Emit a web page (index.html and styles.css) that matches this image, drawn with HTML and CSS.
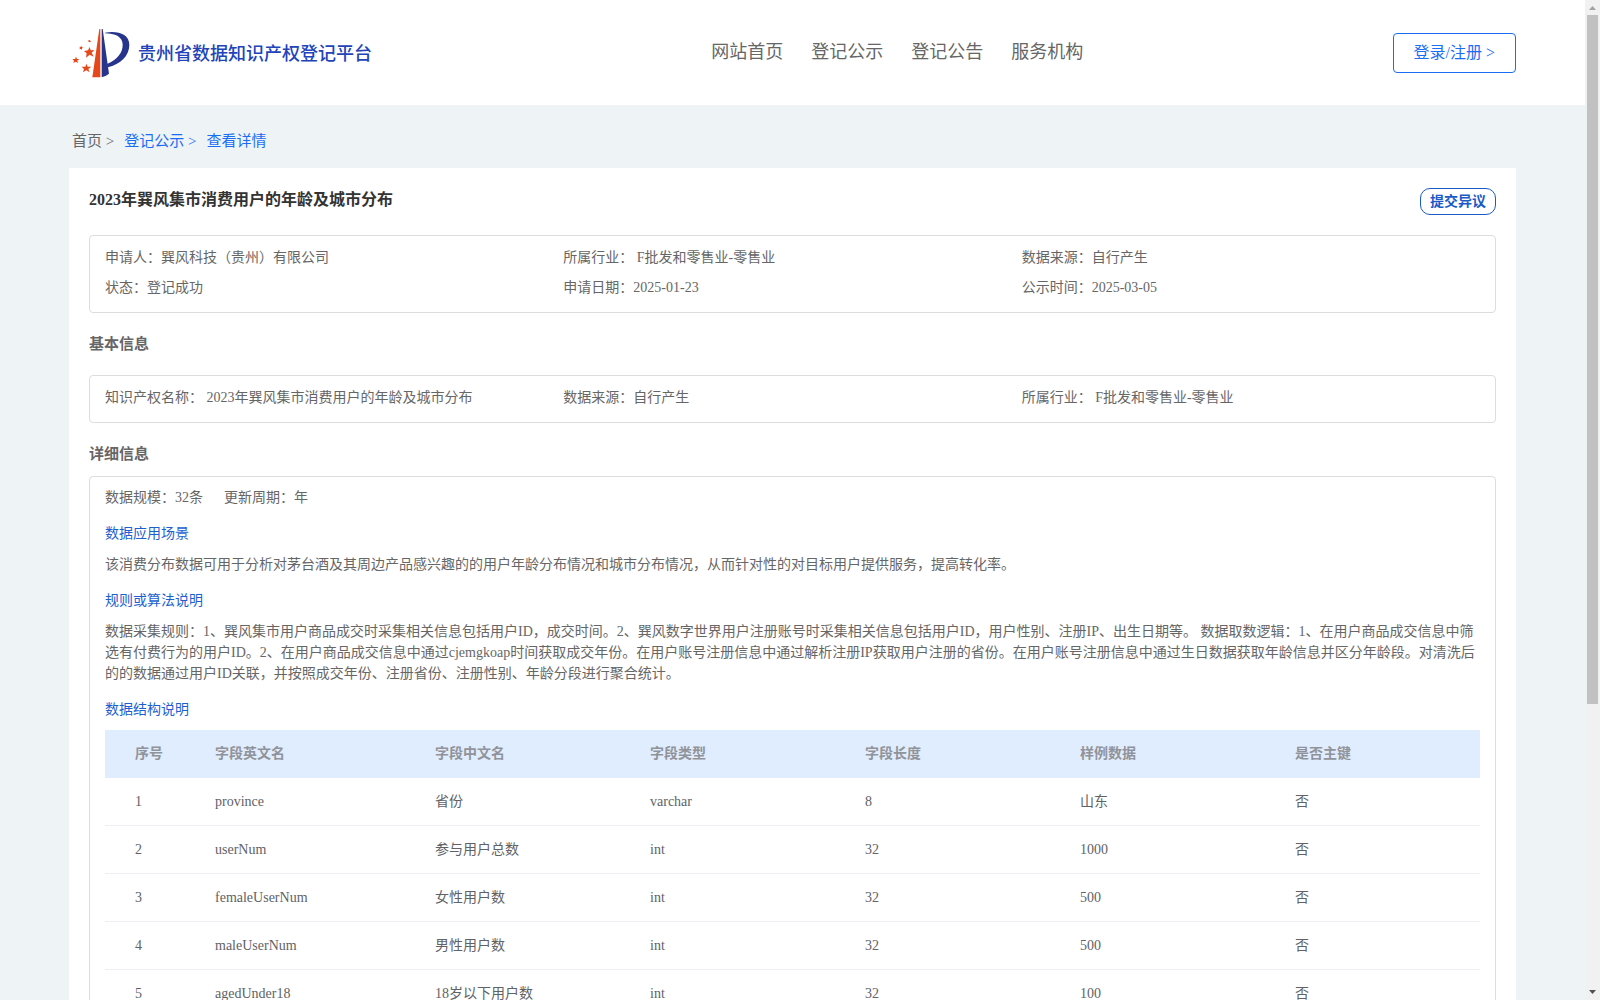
FILE: index.html
```html
<!DOCTYPE html>
<html lang="zh-CN">
<head>
<meta charset="utf-8">
<title>贵州省数据知识产权登记平台</title>
<link rel="stylesheet" href="styles.css">
</head>
<body>
<div class="page">
  <header class="header">
    <a class="brand" href="#">
      <svg class="brand-mark" viewBox="66 54 174 150" aria-hidden="true">
        <path fill="#e5481b" d="M148 57L151 57L151 202L127 202Z"/>
        <path fill="#27348b" d="M155 57L158 57L177 191Q167 199 155 202Z"/>
        <path fill="#27348b" d="M165 68C202 61 238 72 238 104C238 137 212 162 173 172L171 162C202 150 219 127 218 103C217 80 195 70 165 70Z"/>
        <g fill="#e5481b">
          <path d="M119 111L122 121L133 120L125 128L131 140L119 134L108 143L110 130L102 123L114 121Z"/>
          <path d="M109 161L113 170L124 170L115 177L119 187L109 181L99 187L102 177L95 170L106 170Z"/>
          <path d="M78 140L81 147L88 147L82 152L84 159L77 155L70 159L72 152L67 147L75 147Z"/>
          <path d="M94 107L96 112L100 113L96 115L96 119L92 117L88 118L90 114L88 110L92 111Z"/>
          <path d="M119 89L120 92L124 93L121 95L121 97L118 96L115 96L116 93L114 91L118 91Z"/>
        </g>
      </svg>
      <span class="brand-name">贵州省数据知识产权登记平台</span>
    </a>
    <nav class="nav">
      <a href="#">网站首页</a>
      <a href="#">登记公示</a>
      <a href="#">登记公告</a>
      <a href="#">服务机构</a>
    </nav>
    <button class="login" type="button">登录/注册 &gt;</button>
  </header>

  <div class="crumbs">
    <a class="crumb-home" href="#">首页 &gt;</a>
    <a href="#">登记公示 &gt;</a>
    <a href="#">查看详情</a>
  </div>

  <main class="card">
    <div class="card-head">
      <h1 class="title">2023年巽风集市消费用户的年龄及城市分布</h1>
      <button class="object" type="button">提交异议</button>
    </div>

    <div class="box info">
      <div>申请人：巽风科技（贵州）有限公司</div>
      <div>所属行业： F批发和零售业-零售业</div>
      <div>数据来源：自行产生</div>
      <div>状态：登记成功</div>
      <div>申请日期：2025-01-23</div>
      <div>公示时间：2025-03-05</div>
    </div>

    <h2 class="section">基本信息</h2>
    <div class="box info">
      <div>知识产权名称： 2023年巽风集市消费用户的年龄及城市分布</div>
      <div>数据来源：自行产生</div>
      <div>所属行业： F批发和零售业-零售业</div>
    </div>

    <h2 class="section section-tight">详细信息</h2>
    <div class="box detail">
      <div class="scale"><span>数据规模：32条</span><span>更新周期：年</span></div>
      <h3 class="sub">数据应用场景</h3>
      <p class="para">该消费分布数据可用于分析对茅台酒及其周边产品感兴趣的的用户年龄分布情况和城市分布情况，从而针对性的对目标用户提供服务，提高转化率。</p>
      <h3 class="sub">规则或算法说明</h3>
      <p class="para">数据采集规则：1、巽风集市用户商品成交时采集相关信息包括用户ID，成交时间。2、巽风数字世界用户注册账号时采集相关信息包括用户ID，用户性别、注册IP、出生日期等。 数据取数逻辑：1、在用户商品成交信息中筛选有付费行为的用户ID。2、在用户商品成交信息中通过cjemgkoap时间获取成交年份。在用户账号注册信息中通过解析注册IP获取用户注册的省份。在用户账号注册信息中通过生日数据获取年龄信息并区分年龄段。对清洗后的的数据通过用户ID关联，并按照成交年份、注册省份、注册性别、年龄分段进行聚合统计。</p>
      <h3 class="sub">数据结构说明</h3>
      <table class="fields">
        <colgroup><col class="col-index"><col class="col-name"><col><col><col><col><col class="col-key"></colgroup>
        <thead>
          <tr><th>序号</th><th>字段英文名</th><th>字段中文名</th><th>字段类型</th><th>字段长度</th><th>样例数据</th><th>是否主键</th></tr>
        </thead>
        <tbody>
          <tr><td>1</td><td>province</td><td>省份</td><td>varchar</td><td>8</td><td>山东</td><td>否</td></tr>
          <tr><td>2</td><td>userNum</td><td>参与用户总数</td><td>int</td><td>32</td><td>1000</td><td>否</td></tr>
          <tr><td>3</td><td>femaleUserNum</td><td>女性用户数</td><td>int</td><td>32</td><td>500</td><td>否</td></tr>
          <tr><td>4</td><td>maleUserNum</td><td>男性用户数</td><td>int</td><td>32</td><td>500</td><td>否</td></tr>
          <tr><td>5</td><td>agedUnder18</td><td>18岁以下用户数</td><td>int</td><td>32</td><td>100</td><td>否</td></tr>
        </tbody>
      </table>
    </div>
  </main>
</div>
<div class="scrollbar" aria-hidden="true">
  <svg class="arrow" viewBox="0 0 15 15"><path fill="#a3a3a3" d="M4 10L7.500 6L11 10Z"/></svg>
  <div class="track"><div class="thumb"></div></div>
  <svg class="arrow" viewBox="0 0 15 15"><path fill="#505050" d="M4 5L11 5L7.500 9Z"/></svg>
</div>
</body>
</html>
```
FILE: styles.css
```css
* {
  box-sizing: border-box;
}

body {
  display: flex;
  height: 100vh;
  margin: 0;
  overflow: hidden;
  background: #eef3f6;
  color: #666;
  font-family: "Liberation Serif", "Noto Sans CJK SC", serif;
  font-size: 14px;
  line-height: 21px;
  text-spacing-trim: space-all;
}

h1, h2, h3, p {
  margin: 0;
}

a {
  color: inherit;
  text-decoration: none;
}

button {
  font-family: inherit;
  background: #fff;
  cursor: pointer;
}

.page {
  flex: 1;
  min-width: 0;
  overflow: hidden;
}

.header {
  display: flex;
  align-items: center;
  justify-content: space-between;
  height: 105px;
  padding: 0 69px 0 72px;
  background: #fff;
}

.brand {
  display: flex;
  align-items: center;
  gap: 8px;
}

.brand-mark {
  width: 58px;
  height: 50px;
}

.brand-name {
  padding-top: 3px;
  color: #2244b8;
  font-size: 18px;
  font-weight: 500;
  line-height: 24px;
}

.nav {
  display: flex;
  gap: 28px;
  margin-left: 30px;
  padding-bottom: 2px;
  font-size: 18px;
  line-height: 24px;
}

.login {
  height: 40px;
  padding: 0 20px 3px;
  border: 1px solid #1b6ef3;
  border-radius: 4px;
  color: #1b6ef3;
  font-size: 16px;
}

.crumbs {
  display: flex;
  gap: 10px;
  padding: 26px 72px 16px;
  color: #1b6ef3;
  font-size: 15px;
}

.crumb-home {
  color: #666;
}

.card {
  margin: 0 69px;
  padding: 20px 20px 40px;
  background: #fff;
}

.card-head {
  display: flex;
  justify-content: space-between;
  margin-bottom: 20px;
}

.title {
  color: #333;
  font-size: 16px;
  line-height: 24px;
}

.object {
  height: 27px;
  padding: 0 9px 3px;
  border: 1px solid #1a5ac8;
  border-radius: 10px;
  color: #1a5ac8;
  font-size: 14px;
  font-weight: bold;
}

.box {
  border: 1px solid #ddd;
  border-radius: 4px;
  padding: 7px 15px 9px;
}

.info {
  display: grid;
  grid-template-columns: repeat(3, 1fr);
  line-height: 30px;
}

.section {
  padding: 21px 0 20px;
  font-size: 15px;
}

.section-tight {
  padding-bottom: 11px;
}

.detail {
  padding: 10px 15px 20px;
}

.scale {
  display: flex;
  gap: 21px;
}

.sub {
  padding: 15px 0 10px;
  color: #1c5fd0;
  font-size: 14px;
  font-weight: normal;
}

.fields {
  width: 100%;
  table-layout: fixed;
  border-collapse: separate;
  border-spacing: 0;
  color: #606266;
}

.col-index {
  width: 100px;
}

.col-name {
  width: 220px;
}

.col-key {
  width: 195px;
}

.fields th,
.fields td {
  height: 48px;
  padding: 0 10px;
  border-bottom: 1px solid #ebeef5;
  text-align: left;
}

.fields th {
  background: #e0edff;
  border-color: #e0edff;
  color: #909399;
}

.fields th:first-child,
.fields td:first-child {
  padding-left: 30px;
}

.scrollbar {
  display: flex;
  flex-direction: column;
  width: 15px;
  background: #f1f1f1;
}

.arrow {
  width: 15px;
  height: 15px;
}

.track {
  flex: 1;
  padding: 0 2px;
}

.thumb {
  height: 71%;
  background: #c1c1c1;
}
```
